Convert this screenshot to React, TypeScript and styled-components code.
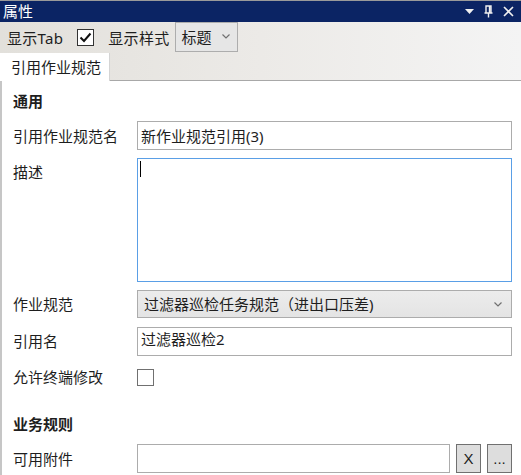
import styled, { createGlobalStyle } from 'styled-components';

const GlobalStyle = createGlobalStyle`
  html, body {
    margin: 0;
    padding: 0;
    background: #ffffff;
  }
  body {
    font-family: 'Noto Sans', 'Noto Sans CJK SC', sans-serif;
    font-size: 15px;
    color: #1e1e1e;
  }
`;

const CheckIcon = () => (
  <svg width="13" height="11" viewBox="0 0 13 11">
    <path d="M1.5 5.5 L5 9 L11.5 1.5" fill="none" stroke="#111" strokeWidth="2" />
  </svg>
);

const Chevron = () => (
  <svg width="8" height="5" viewBox="0 0 8 5">
    <path d="M0.5 0.5 L4 4 L7.5 0.5" fill="none" stroke="#707070" strokeWidth="1.2" />
  </svg>
);

const App = () => {
  return (
    <>
      <GlobalStyle />
      <Panel>
        <TitleBar>
          <TitleText>属性</TitleText>
          <TitleIcons>
            <svg width="9" height="5" viewBox="0 0 9 5">
              <path d="M0 0 H9 L4.5 5 Z" fill="#f0f0f0" />
            </svg>
            <svg width="9" height="13" viewBox="0 0 9 13">
              <path d="M2 1 H7 V8 H2 Z M0.5 8 H8.5 M4.5 8 V12.5 M5.5 1.5 V7.5" fill="none" stroke="#f0f0f0" strokeWidth="1.4" />
            </svg>
            <svg width="11" height="11" viewBox="0 0 11 11">
              <path d="M1 1 L10 10 M10 1 L1 10" stroke="#f0f0f0" strokeWidth="1.6" />
            </svg>
          </TitleIcons>
        </TitleBar>
        <Header>
          <Toolbar>
            <ToolLabel>显示Tab</ToolLabel>
            <CheckBox checked>
              <CheckIcon />
            </CheckBox>
            <ToolLabel>显示样式</ToolLabel>
            <ToolCombo>
              <span>标题</span>
              <Chevron />
            </ToolCombo>
          </Toolbar>
          <TabStrip>
            <Tab>引用作业规范</Tab>
            <TabFill />
          </TabStrip>
        </Header>
        <Content>
          <SectionTitle>通用</SectionTitle>
          <Row>
            <Label>引用作业规范名</Label>
            <TextBox>新作业规范引用(3)</TextBox>
          </Row>
          <Row $top $gap={8}>
            <Label $top>描述</Label>
            <TextArea>
              <Caret />
            </TextArea>
          </Row>
          <Row $gap={8}>
            <Label>作业规范</Label>
            <Select>
              <span>过滤器巡检任务规范（进出口压差)</span>
              <Chevron />
            </Select>
          </Row>
          <Row $top $gap={9}>
            <Label $top>引用名</Label>
            <TextBox $topText>过滤器巡检2</TextBox>
          </Row>
          <Row $gap={6} $height={30}>
            <Label>允许终端修改</Label>
            <CheckBox $light />
          </Row>
          <SectionTitle $gap={22}>业务规则</SectionTitle>
          <Row>
            <Label>可用附件</Label>
            <AttachRow>
              <TextBox />
              <SmallButton>X</SmallButton>
              <SmallButton>...</SmallButton>
            </AttachRow>
          </Row>
        </Content>
      </Panel>
    </>
  );
};

const Panel = styled.div`
  display: flex;
  flex-direction: column;
  width: 521px;
  height: 475px;
  overflow: hidden;
  background: #ffffff;
`;

const TitleBar = styled.div`
  display: flex;
  align-items: center;
  justify-content: space-between;
  height: 21px;
  border-top: 1px solid #9a9a9a;
  background: #0b2464;
  padding: 0 7px 0 3px;
`;

const TitleText = styled.span`
  color: #ffffff;
  font-size: 15px;
  line-height: 21px;
`;

const TitleIcons = styled.div`
  display: flex;
  align-items: center;
  gap: 10px;
`;

const Header = styled.div`
  background: linear-gradient(to right, #e2e0db 0%, #eceae7 50%, #f4f4f4 100%);
`;

const Toolbar = styled.div`
  display: flex;
  align-items: center;
  height: 31px;
  padding-left: 7px;
`;

const ToolLabel = styled.span`
  line-height: 20px;
  margin-right: 14px;
  letter-spacing: 0.3px;
`;

const CheckBox = styled.div<{ checked?: boolean; $light?: boolean }>`
  display: flex;
  align-items: center;
  justify-content: center;
  box-sizing: border-box;
  width: 17px;
  height: 17px;
  border: 1px solid ${({ $light }) => ($light ? '#707070' : '#333333')};
  background: #ffffff;
  margin-right: ${({ checked }) => (checked ? '14px' : '0')};
`;

const ToolCombo = styled.div`
  display: flex;
  align-items: center;
  justify-content: space-between;
  box-sizing: border-box;
  width: 63px;
  height: 30px;
  margin-left: -8px;
  padding: 0 7px 2px 5px;
  border: 1px solid #adadad;
  background: #e6e6e6;
  align-self: flex-start;
`;

const TabStrip = styled.div`
  display: flex;
  height: 28px;
`;

const Tab = styled.div`
  box-sizing: border-box;
  width: 110px;
  padding: 3px 0 0 11px;
  background: #ffffff;
  line-height: 22px;
  border-right: 1px solid #d4d4d4;
`;

const TabFill = styled.div`
  flex: 1;
  border-bottom: 1px solid #a8a8a8;
`;

const Content = styled.div`
  flex: 1;
  display: flex;
  flex-direction: column;
  padding: 10px 9px 0 11px;
  border-left: 2px solid #c6c6c6;
`;

const SectionTitle = styled.div<{ $gap?: number }>`
  font-weight: bold;
  line-height: 20px;
  margin-top: ${({ $gap }) => $gap ?? 0}px;
  margin-bottom: 10px;
`;

const Row = styled.div<{ $top?: boolean; $gap?: number; $height?: number }>`
  display: flex;
  align-items: ${({ $top }) => ($top ? 'flex-start' : 'center')};
  margin-top: ${({ $gap }) => $gap ?? 0}px;
  ${({ $height }) => ($height ? `height: ${$height}px;` : '')}
`;

const Label = styled.div<{ $top?: boolean }>`
  width: 124px;
  flex-shrink: 0;
  line-height: 20px;
  margin-top: ${({ $top }) => ($top ? '4px' : '0')};
`;

const TextBox = styled.div<{ $topText?: boolean }>`
  flex: 1;
  box-sizing: border-box;
  height: 29px;
  padding: ${({ $topText }) => ($topText ? '1px 3px' : '4px 3px')};
  line-height: 20px;
  border: 1px solid #acacac;
  background: #ffffff;
`;

const TextArea = styled.div`
  flex: 1;
  box-sizing: border-box;
  height: 124px;
  padding: 2px 2px;
  border: 1px solid #5a9fe6;
  background: #ffffff;
`;

const Caret = styled.div`
  width: 1px;
  height: 16px;
  background: #000000;
`;

const Select = styled.div`
  flex: 1;
  display: flex;
  align-items: center;
  justify-content: space-between;
  box-sizing: border-box;
  height: 28px;
  padding: 0 9px 0 6px;
  border: 1px solid #acacac;
  background: linear-gradient(#ececec, #e4e4e4);
  line-height: 20px;
`;

const AttachRow = styled.div`
  flex: 1;
  display: flex;
  gap: 5px;
`;

const SmallButton = styled.div`
  display: flex;
  align-items: center;
  justify-content: center;
  box-sizing: border-box;
  width: 25px;
  height: 29px;
  margin-left: 1px;
  border: 1px solid #707070;
  background: #dddddd;
  font-family: 'Liberation Sans', 'Noto Sans CJK SC', sans-serif;
  font-size: 15px;
`;

export default App;
